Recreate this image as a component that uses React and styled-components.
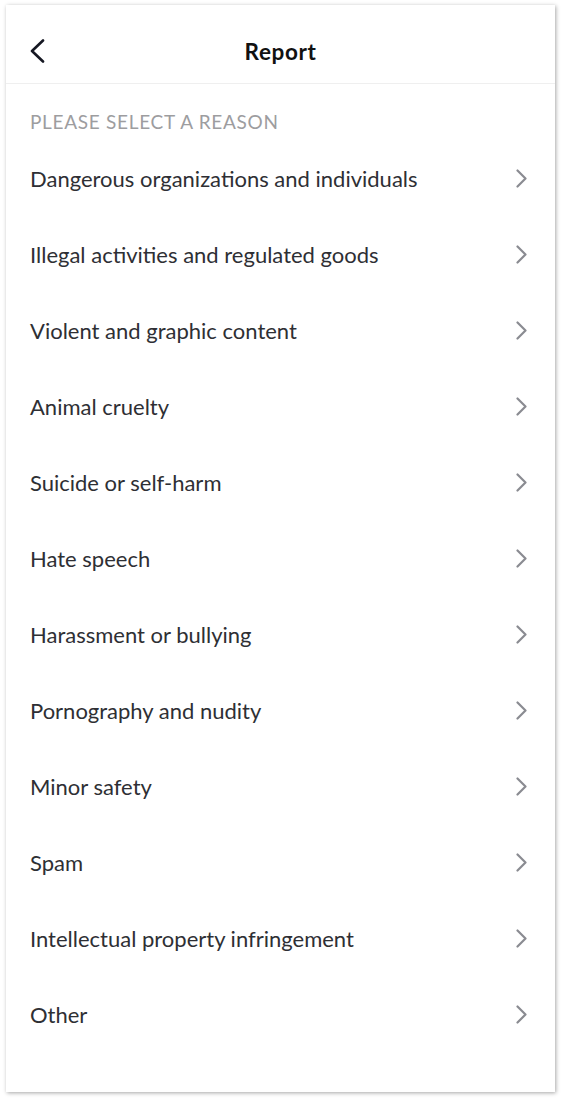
import React from "react";
import styled, { createGlobalStyle } from "styled-components";

const Global = createGlobalStyle`
  html, body { margin: 0; padding: 0; background: #ffffff; }
  body { font-family: "Lato", "Open Sans", sans-serif; -webkit-font-smoothing: antialiased; }
  * { box-sizing: border-box; }
`;

const Page = styled.div`
  padding: 5px 9px 6px 6px;
  background: #ffffff;
`;

const Card = styled.div`
  height: 1087px;
  background: #ffffff;
  box-shadow: 1px 1px 4px rgba(0, 0, 0, 0.35);
  display: flex;
  flex-direction: column;
`;

const Header = styled.header`
  height: 79px;
  padding-top: 14px;
  display: grid;
  grid-template-columns: 60px 1fr 60px;
  align-items: center;
  border-bottom: 1px solid #efefef;
`;

const BackButton = styled.button`
  border: 0;
  background: none;
  padding: 0 0 0 24px;
  height: 100%;
  display: flex;
  align-items: center;
  cursor: pointer;
`;

const Title = styled.h1`
  margin: 0;
  text-align: center;
  font-size: 22.5px;
  font-weight: 700;
  color: #111111;
  letter-spacing: 0.6px;
`;

const Section = styled.section`
  padding: 24px 0 0;
`;

const SectionLabel = styled.div`
  padding: 0 24px;
  margin-bottom: 4px;
  font-size: 19px;
  color: #9d9d9f;
  letter-spacing: 0.7px;
  line-height: 28px;
`;

const List = styled.ul`
  list-style: none;
  margin: 0;
  padding: 0;
`;

const Row = styled.li`
  height: 76px;
  display: flex;
  align-items: center;
  justify-content: space-between;
  padding: 0 28px 0 24px;
  cursor: pointer;
`;

const RowLabel = styled.span`
  font-size: 22px;
  color: #2e2f34;
`;

const Chevron = ({ color = "#8a8b91", w = 11, h = 19, sw = 2.2 }) => (
  <svg width={w} height={h} viewBox={`0 0 ${w} ${h}`} fill="none">
    <path
      d={`M1.5 1.5 L${w - 1.5} ${h / 2} L1.5 ${h - 1.5}`}
      stroke={color}
      strokeWidth={sw}
      strokeLinecap="round"
      strokeLinejoin="round"
    />
  </svg>
);

const BackIcon = () => (
  <svg width="15" height="24" viewBox="0 0 15 24" fill="none">
    <path
      d="M13 1.5 L2 12 L13 22.5"
      stroke="#161823"
      strokeWidth="2.6"
      strokeLinecap="round"
      strokeLinejoin="round"
    />
  </svg>
);

const reasons = [
  "Dangerous organizations and individuals",
  "Illegal activities and regulated goods",
  "Violent and graphic content",
  "Animal cruelty",
  "Suicide or self-harm",
  "Hate speech",
  "Harassment or bullying",
  "Pornography and nudity",
  "Minor safety",
  "Spam",
  "Intellectual property infringement",
  "Other",
];

export default function App() {
  return (
    <>
      <Global />
      <Page>
        <Card>
          <Header>
            <BackButton aria-label="Back">
              <BackIcon />
            </BackButton>
            <Title>Report</Title>
            <span />
          </Header>
          <Section>
            <SectionLabel>PLEASE SELECT A REASON</SectionLabel>
            <List>
              {reasons.map((r) => (
                <Row key={r}>
                  <RowLabel>{r}</RowLabel>
                  <Chevron />
                </Row>
              ))}
            </List>
          </Section>
        </Card>
      </Page>
    </>
  );
}
